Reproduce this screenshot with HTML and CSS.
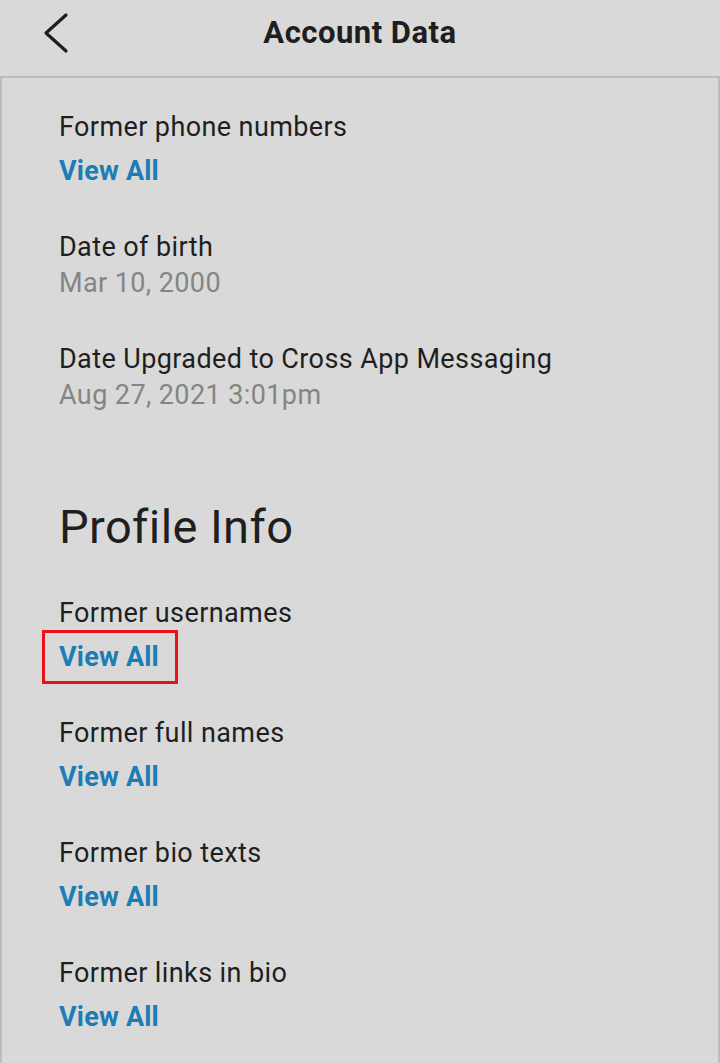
FILE: index.html
```html
<!DOCTYPE html>
<html lang="en">
<head>
    <meta charset="UTF-8">
    <meta name="viewport" content="width=device-width, initial-scale=1.0">
    <title>Account Data</title>
    <link rel="stylesheet" href="styles.css">
</head>
<body>
    <header class="top-bar">
        <button class="back-btn" aria-label="Back">
            <svg width="28" height="44" viewBox="0 0 28 44">
                <path d="M24 4 L4 22 L24 40" fill="none" stroke="#1e1e1e" stroke-width="3.2" stroke-linecap="round" stroke-linejoin="round"/>
            </svg>
        </button>
        <h1>Account Data</h1>
    </header>

    <main class="content">
        <div class="item">
            <div class="label">Former phone numbers</div>
            <a class="link" href="#">View All</a>
        </div>
        <div class="item">
            <div class="label">Date of birth</div>
            <div class="value">Mar 10, 2000</div>
        </div>
        <div class="item">
            <div class="label">Date Upgraded to Cross App Messaging</div>
            <div class="value">Aug 27, 2021 3:01pm</div>
        </div>

        <h2 class="section-title">Profile Info</h2>

        <div class="item">
            <div class="label">Former usernames</div>
            <a class="link highlighted" href="#">View All</a>
        </div>
        <div class="item">
            <div class="label">Former full names</div>
            <a class="link" href="#">View All</a>
        </div>
        <div class="item">
            <div class="label">Former bio texts</div>
            <a class="link" href="#">View All</a>
        </div>
        <div class="item">
            <div class="label">Former links in bio</div>
            <a class="link" href="#">View All</a>
        </div>
    </main>
</body>
</html>
```

FILE: styles.css
```css
* {
    margin: 0;
    padding: 0;
    box-sizing: border-box;
}

body {
    font-family: Roboto, "Liberation Sans", sans-serif;
    background-color: #d9d9d9;
    color: #1f1f1f;
    height: 1063px;
    overflow: hidden;
}

.top-bar {
    height: 78px;
    border-bottom: 2px solid #bcbcbc;
    display: flex;
    align-items: center;
    justify-content: center;
    position: relative;
}

.back-btn {
    position: absolute;
    left: 42px;
    top: 11px;
    background: none;
    border: none;
    width: 28px;
    height: 44px;
}

.top-bar h1 {
    font-size: 31px;
    font-weight: 700;
    letter-spacing: 0.5px;
    margin-top: -12px;
    color: #1e1e1e;
}

.content {
    min-height: 985px;
    border-left: 2px solid #bcbcbc;
    border-right: 2px solid #bcbcbc;
    padding: 31px 0 0 57px;
    display: flex;
    flex-direction: column;
    gap: 40px;
}

.item {
    display: flex;
    flex-direction: column;
    align-items: flex-start;
}

.label,
.value {
    font-size: 27px;
    line-height: 36px;
    letter-spacing: 0.4px;
}

.value {
    color: #858585;
}

.link {
    margin-top: 8px;
    font-size: 27px;
    line-height: 36px;
    font-weight: 700;
    letter-spacing: 0.2px;
    color: #1b7db4;
    text-decoration: none;
}

.highlighted {
    position: relative;
}

.highlighted::after {
    content: "";
    position: absolute;
    top: -9px;
    bottom: -9px;
    left: -17px;
    right: -19px;
    border: 3px solid #ea1119;
}

.section-title {
    margin-top: 46px;
    font-size: 47px;
    line-height: 56px;
    font-weight: 400;
    letter-spacing: 0.4px;
    color: #1f1f1f;
}
```
